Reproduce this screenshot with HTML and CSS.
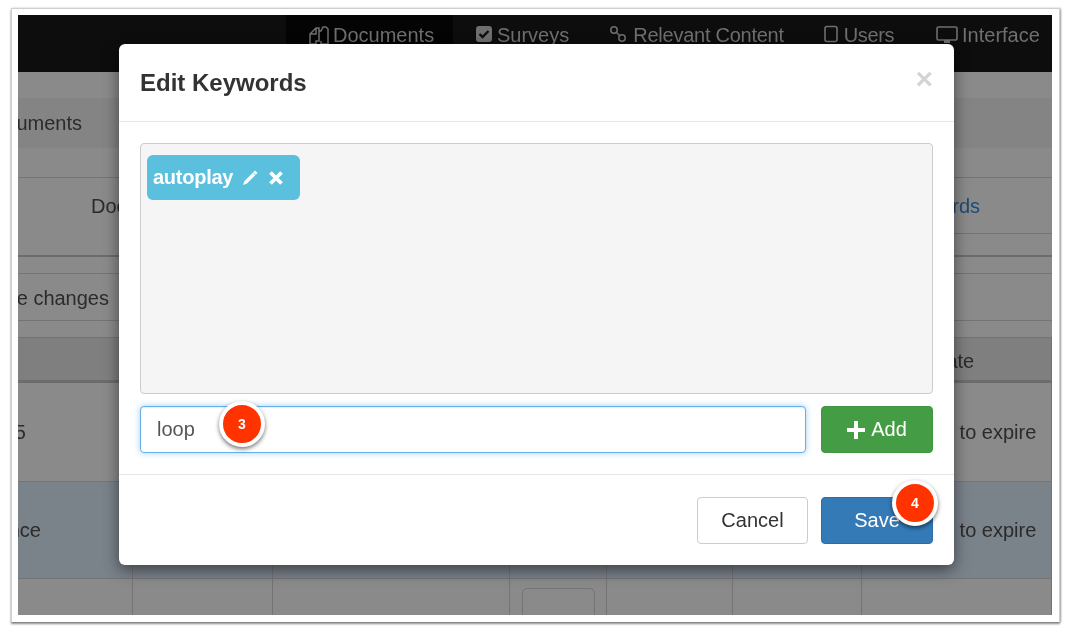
FILE: index.html
```html
<!DOCTYPE html>
<html lang="en">
<head>
<meta charset="utf-8">
<title>Edit Keywords</title>
<link rel="stylesheet" href="styles.css">
</head>
<body>
<div class="shot">
  <div class="stage">
    <nav class="navbar">
      <div class="nav-item active">
        <svg class="ico" viewBox="0 0 22 22" width="22" height="22"><path d="M2 19V9l6-6h3v13H8v3zM8 3v6H2M11 6h2l2-4h3l2 2v15h-7v-3" fill="none" stroke="currentColor" stroke-width="1.5"/></svg>
        <span>Documents</span>
      </div>
      <div class="nav-item surveys">
        <svg class="ico" viewBox="0 0 18 18" width="18" height="18"><rect x="1" y="1" width="16" height="16" rx="3" fill="currentColor"/><path d="M4.5 9l3 3 6-6" fill="none" stroke="#0d0d0d" stroke-width="2.4"/></svg>
        <span>Surveys</span>
      </div>
      <div class="nav-item relevant">
        <svg class="ico" viewBox="0 0 18 18" width="18" height="18"><g fill="none" stroke="currentColor" stroke-width="1.5"><circle cx="5" cy="5" r="3.200"/><circle cx="13" cy="13" r="3.200"/><path d="M7 7l4 4"/></g></svg>
        <span>Relevant Content</span>
      </div>
      <div class="nav-item users">
        <svg class="ico" viewBox="0 0 14 18" width="14" height="18"><rect x="1" y="1.500" width="12" height="15" rx="2" fill="none" stroke="currentColor" stroke-width="1.6"/></svg>
        <span>Users</span>
      </div>
      <div class="nav-item iface">
        <svg class="ico" viewBox="0 0 22 22" width="22" height="22"><rect x="1" y="2" width="20" height="13" rx="1.500" fill="none" stroke="currentColor" stroke-width="1.6"/><path d="M8 15h6v3H8z" fill="currentColor"/></svg>
        <span>Interface</span>
      </div>
    </nav>

    <div class="spacer-a"></div>
    <div class="crumb"><span>Documents</span></div>
    <div class="spacer-b"></div>
    <div class="tabs">
      <span class="tab-doc">Documents</span>
      <div class="tab-key"><a>Keywords</a></div>
    </div>
    <div class="spacer-c"></div>
    <div class="toolbar"><span>Save changes</span></div>
    <div class="spacer-c"></div>

    <div class="table">
      <div class="cell head first"><span class="filter"><svg viewBox="0 0 10 10" width="10" height="10"><path d="M1 2h8L6 6v3L4 8V6z" fill="#2b2b2b"/></svg></span></div>
      <div class="cell head"></div>
      <div class="cell head"></div>
      <div class="cell head"></div>
      <div class="cell head"></div>
      <div class="cell head"></div>
      <div class="cell head last"><span class="date">Date</span></div>

      <div class="cell row first"><span>2015</span></div>
      <div class="cell row"></div>
      <div class="cell row"></div>
      <div class="cell row"></div>
      <div class="cell row"></div>
      <div class="cell row"></div>
      <div class="cell row last"><span class="exp">Set to expire</span></div>

      <div class="cell row sel first"><span>Reference</span></div>
      <div class="cell row sel"></div>
      <div class="cell row sel"></div>
      <div class="cell row sel"></div>
      <div class="cell row sel"></div>
      <div class="cell row sel"></div>
      <div class="cell row sel last"><span class="exp">Set to expire</span></div>

      <div class="cell end first"></div>
      <div class="cell end"></div>
      <div class="cell end"></div>
      <div class="cell end"><div class="mini"></div></div>
      <div class="cell end"></div>
      <div class="cell end"></div>
      <div class="cell end last"></div>
    </div>

    <section class="modal">
      <header class="modal-head">
        <h2>Edit Keywords</h2>
        <span class="close">×</span>
      </header>
      <div class="modal-body">
        <div class="keywords">
          <div class="tag">
            <span>autoplay</span>
            <svg class="pencil" viewBox="0 0 18 18" width="18" height="18"><path d="M14 1.500l2.500 2.500L6 14.500l-4 1.500 1.500-4z" fill="#fff"/><path d="M12 3.500l2.500 2.500" stroke="#5bc0de" stroke-width=".8"/></svg>
            <svg class="remove" viewBox="0 0 16 16" width="16" height="16"><path d="M2.500 2.500l11 11M13.500 2.500l-11 11" stroke="#fff" stroke-width="3.800"/></svg>
          </div>
        </div>
        <div class="add-row">
          <div class="input">loop</div>
          <div class="btn btn-add">
            <svg viewBox="0 0 18 18" width="18" height="18"><path d="M9 0v18M0 9h18" stroke="#fff" stroke-width="4"/></svg>
            <span>Add</span>
          </div>
        </div>
      </div>
      <footer class="modal-foot">
        <div class="btn btn-cancel">Cancel</div>
        <div class="btn btn-save">Save</div>
      </footer>
    </section>

    <div class="callout c3">3</div>
    <div class="callout c4">4</div>
  </div>
</div>
</body>
</html>
```
FILE: styles.css
```css
* { box-sizing: border-box; }
html, body { margin: 0; padding: 0; background: #fff; }
body {
  width: 1071px;
  height: 631px;
  overflow: hidden;
  padding: 8px 11px;
  font-family: "Liberation Sans", Arial, sans-serif;
  font-size: 20px;
  color: #2b2b2b;
}
.shot {
  width: 1049px;
  height: 614px;
  padding: 6px 7px 7px 6px;
  background: #fff;
  border: 1px solid #cfcfcf;
  border-width: 1px 1px 0 1px;
  box-shadow: 0 2px 2px rgba(0,0,0,.45), 1px 0 2px rgba(0,0,0,.25);
}
.stage {
  position: relative;
  width: 1034px;
  height: 600px;
  overflow: hidden;
  background: #8a8a8a;
  display: flex;
  flex-direction: column;
  filter: blur(.3px);
}

/* navbar */
.navbar {
  flex: none;
  height: 57px;
  background: #0d0d0d;
  display: flex;
  padding-left: 268px;
  color: #6f6f6f;
  line-height: 41px;
}
.nav-item { display: flex; align-items: flex-start; white-space: nowrap; }
.nav-item .ico { flex: none; margin-top: 10px; }
.nav-item.active { width: 167px; background: #040404; padding-left: 22px; gap: 3px; }
.surveys { margin-left: 22px; gap: 4px; }
.relevant { margin-left: 40px; gap: 6px; letter-spacing: -.25px; }
.users { margin-left: 40px; gap: 6px; letter-spacing: -.4px; }
.iface { margin-left: 42px; gap: 4px; }

/* page under the dialog */
.spacer-a { flex: none; height: 26px; }
.crumb {
  flex: none;
  height: 50px;
  background: #848484;
  width: 100%;
  padding-right: 970px;
  display: flex;
  justify-content: flex-end;
  align-items: center;
  white-space: nowrap;
}
.spacer-b { flex: none; height: 29px; }
.tabs {
  flex: none;
  height: 80px;
  border-top: 1px solid #747474;
  border-bottom: 2px solid #6c6c6c;
  display: flex;
  justify-content: space-between;
}
.tab-doc { margin: 17px 0 0 73px; line-height: 23px; }
.tab-key {
  width: 130px;
  height: 56px;
  border-bottom: 1px solid #747474;
  display: flex;
  justify-content: flex-end;
  padding: 17px 72px 0 0;
  line-height: 23px;
  white-space: nowrap;
}
.tab-key a { color: #1e4a73; }
.spacer-c { flex: none; height: 16px; }
.toolbar {
  flex: none;
  height: 48px;
  padding: 2px 943px 0 0;
  border-top: 1px solid #747474;
  border-bottom: 1px solid #747474;
  display: flex;
  justify-content: flex-end;
  align-items: center;
  white-space: nowrap;
  width: 100%;
}
.table {
  flex: 1;
  display: grid;
  grid-template-columns: 115px 140px 237px 97px 126px 129px 190px;
  grid-template-rows: 45px 99px 97px 1fr;
  border-top: 1px solid #747474;
}
.cell {
  display: flex;
  align-items: center;
  justify-content: flex-end;
  white-space: nowrap;
  border-right: 1px solid #747474;
  min-width: 0;
}
.head { background: #7f7f7f; border-bottom: 3px solid #6c6c6c; position: relative; }
.row { border-bottom: 1px solid #747474; }
.sel { background: #7a828a; }
.first > span { margin-right: 106px; }
.sel.first > span { margin-right: 91px; }
.last { justify-content: flex-start; overflow: hidden; }
.date { margin: 5px 0 0 70px; }
.exp { margin-left: 62px; }
.first > .filter {
  position: absolute;
  right: -5px;
  top: 18px;
  width: 18px;
  height: 18px;
  border: 2px solid #2b2b2b;
  border-radius: 50%;
  margin: 0;
  display: flex;
  align-items: center;
  justify-content: center;
}
.mini {
  align-self: flex-start;
  width: 74px;
  height: 40px;
  margin: 9px 11px 0 12px;
  border: 1px solid #747474;
  border-radius: 5px;
}

/* dialog */
.modal {
  position: absolute;
  left: 101px;
  top: 29px;
  width: 835px;
  height: 521px;
  background: #fff;
  border-radius: 6px;
  box-shadow: 0 5px 15px rgba(0,0,0,.5);
  display: flex;
  flex-direction: column;
  color: #333;
}
.modal-head {
  flex: none;
  height: 78px;
  border-bottom: 1px solid #e5e5e5;
  display: flex;
  justify-content: space-between;
  padding: 0 21px;
}
.modal-head h2 {
  margin: 24px 0 0;
  font-size: 24px;
  line-height: 30px;
  font-weight: bold;
}
.close {
  font-size: 30px;
  font-weight: bold;
  line-height: 36px;
  margin-top: 17px;
  color: #d4d4d4;
}
.modal-body {
  flex: none;
  height: 353px;
  padding: 21px;
  border-bottom: 1px solid #e5e5e5;
  display: flex;
  flex-direction: column;
  gap: 12px;
}
.keywords {
  flex: none;
  height: 251px;
  background: #f5f5f5;
  border: 1px solid #ccc;
  border-radius: 4px;
  padding: 11px 6px;
}
.tag {
  width: 153px;
  height: 45px;
  background: #5bc0de;
  border-radius: 6px;
  color: #fff;
  font-weight: bold;
  display: flex;
  align-items: center;
  padding: 0 0 0 6px;
  line-height: 43px;
}
.tag span { width: 88px; white-space: nowrap; letter-spacing: -.25px; }
.pencil { margin-right: 9px; }
.add-row { flex: none; height: 47px; display: flex; justify-content: space-between; }
.input {
  width: 666px;
  height: 47px;
  background: #fff;
  border: 1px solid #66afe9;
  border-radius: 4px;
  box-shadow: inset 0 1px 1px rgba(0,0,0,.075), 0 0 6px rgba(102,175,233,.6);
  padding: 0 16px;
  line-height: 45px;
  color: #555;
}
.btn {
  height: 47px;
  border-radius: 4px;
  border: 1px solid transparent;
  display: flex;
  align-items: center;
  justify-content: center;
}
.btn-add { width: 112px; background: #449d44; border-color: #419641; color: #fff; gap: 6px; }
.modal-foot {
  flex: none;
  padding: 22px 21px 0;
  display: flex;
  justify-content: flex-end;
  gap: 13px;
}
.btn-cancel { width: 111px; background: #fff; border-color: #ccc; color: #333; }
.btn-save { width: 112px; background: #337ab7; border-color: #2e6da4; color: #fff; }

/* numbered callouts */
.callout {
  position: absolute;
  width: 46px;
  height: 46px;
  background: #ff3300;
  border: 4px solid #fff;
  border-radius: 50%;
  box-shadow: 0 2px 4px rgba(0,0,0,.55);
  color: #fff;
  font-size: 14px;
  font-weight: bold;
  display: flex;
  align-items: center;
  justify-content: center;
}
.c3 { left: 201px; top: 386px; }
.c4 { left: 874px; top: 465px; }
```
